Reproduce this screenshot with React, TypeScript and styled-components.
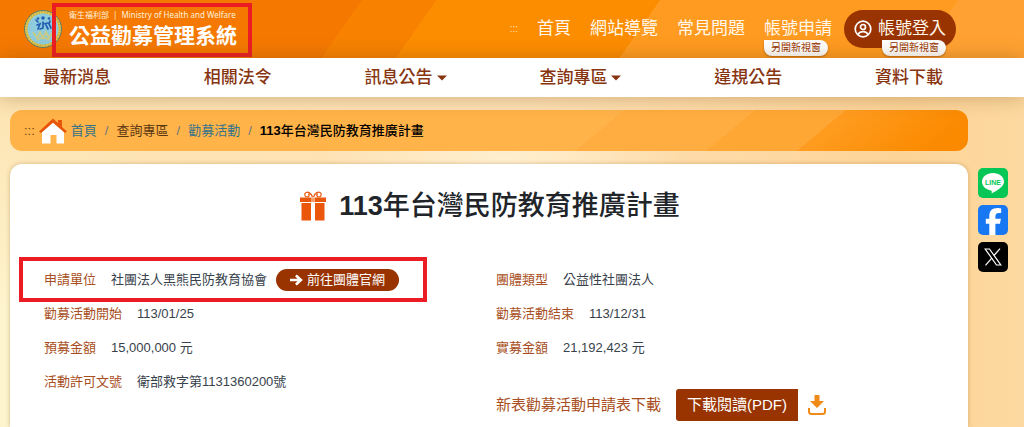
import React from 'react';
import styled, { createGlobalStyle, css } from 'styled-components';
import { FaFacebookF } from 'react-icons/fa6';

const rust = '#993300';

const GlobalStyle = createGlobalStyle`
  * { box-sizing: border-box; }
  body {
    margin: 0;
    font-family: "Liberation Sans", "Noto Sans CJK TC", sans-serif;
    font-size: 13px;
    line-height: 20px;
    color: #212529;
  }
  a { text-decoration: none; }
`;

const Page = styled.div`
  min-height: 100vh;
  display: flex;
  flex-direction: column;
  background:
    radial-gradient(ellipse 180px 50px at 49% 160px, rgba(255, 243, 214, 0.8), transparent),
    radial-gradient(ellipse 300px 320px at 0 100%, #fdf3cc 40%, rgba(253, 243, 204, 0)),
    linear-gradient(90deg, #fde4b3 0%, #fee1b5 50%, #fdd498 88%, #fcd9a0 100%);
`;

const Header = styled.header`
  min-height: 58px;
  display: flex;
  align-items: center;
  justify-content: space-between;
  padding: 0 68px 0 23px;
  background: linear-gradient(
    125deg,
    #f57900 0 34%,
    #f88200 34% 41%,
    #fd8d00 41% 62%,
    #ff9b20 62% 90%,
    #ffa233 90% 100%
  );
`;

const Brand = styled.a`
  display: flex;
  align-items: center;
  gap: 6px;
  color: #fff;
`;

const BrandText = styled.span`
  position: relative;
  display: flex;
  flex-direction: column;
  font-family: "Noto Sans", "Noto Sans CJK TC", sans-serif;
`;

const Ministry = styled.span`
  display: flex;
  gap: 4px;
  font-size: 8px;
  line-height: 12px;
  color: #fff0dc;
`;

const SystemName = styled.strong`
  font-size: 21px;
  line-height: 28px;
  font-weight: 700;
`;

const Frame = styled.span<{ $inset: string }>`
  position: absolute;
  inset: ${(p) => p.$inset};
  border: 4px solid #ec1c24;
  pointer-events: none;
`;

const TopNav = styled.nav`
  display: flex;
  align-items: center;
  gap: 19px;
`;

const linkText = css`
  font-size: 17px;
  line-height: 26px;
  color: #fff7ea;
  white-space: nowrap;
`;

const TopLink = styled.a`
  ${linkText}
  position: relative;
`;

const Dots = styled.a<{ $size: number; $color: string }>`
  font-size: ${(p) => p.$size}px;
  color: ${(p) => p.$color};
`;

const Login = styled.a`
  ${linkText}
  position: relative;
  display: flex;
  align-items: center;
  gap: 6px;
  margin-left: -7px;
  padding: 6px 10px;
  border-radius: 20px;
  background: ${rust};
`;

const NewWindow = styled.span<{ $right: number }>`
  position: absolute;
  right: ${(p) => p.$right}px;
  bottom: -14px;
  padding: 0 7px;
  border-radius: 0 8px 8px 8px;
  background: #fff;
  box-shadow: 0 1px 2px rgba(120, 50, 0, 0.5);
  font-size: 10px;
  line-height: 16px;
  color: ${rust};
`;

const LoginBadge = styled(NewWindow)`
  bottom: -8px;
`;

const MainNav = styled.nav`
  position: relative;
  display: flex;
  justify-content: space-between;
  align-items: center;
  min-height: 39px;
  padding: 0 81px 0 43px;
  background: #fff;
  box-shadow: 0 0 20px rgba(110, 70, 20, 0.35);
`;

const MainLink = styled.a`
  display: flex;
  align-items: center;
  gap: 4px;
  font-size: 17px;
  line-height: 26px;
  font-weight: 500;
  color: #873510;
  white-space: nowrap;
`;

const Body = styled.div`
  flex: 1;
  display: flex;
  gap: 10px;
  padding: 13px 16px 0 10px;
`;

const Main = styled.main`
  flex: 1;
  display: flex;
  flex-direction: column;
  gap: 13px;
`;

const Crumbs = styled.nav`
  display: flex;
  align-items: center;
  gap: 4px;
  min-height: 41px;
  padding: 0 14px;
  border-radius: 12px;
  background: linear-gradient(
    140deg,
    #ffb349 0,
    #ffb349 61%,
    #ffad40 61% 74%,
    #ffa735 74% 83%,
    #ff9c20 83%,
    #fb8a00 96%
  );
`;

const CrumbList = styled.ol`
  display: flex;
  margin: 0;
  padding: 0;
  list-style: none;
`;

const Crumb = styled.li`
  color: #5b3714;
  & + &::before {
    content: "/";
    padding: 0 8px;
    color: #6c757d;
  }
  &[aria-current] {
    color: #000;
    font-weight: 500;
  }
  a { color: #34748a; }
`;

const Card = styled.section`
  flex: 1;
  padding: 22px 20px 6px 34px;
  border-radius: 12px 12px 0 0;
  background: #fff;
  box-shadow: 0 0 4px rgba(130, 80, 20, 0.35);
`;

const Title = styled.h1`
  display: flex;
  justify-content: center;
  align-items: center;
  gap: 13px;
  margin: 0 0 37px;
  padding-right: 12px;
  font-size: 27px;
  line-height: 40px;
  font-weight: 500;
`;

const Columns = styled.div`
  display: grid;
  grid-template-columns: 1fr 1fr;
`;

const Details = styled.dl`
  margin: 0;
`;

const Row = styled.div`
  position: relative;
  display: flex;
  align-items: center;
  gap: 15px;
  height: 34px;
  white-space: nowrap;
  dt { color: #a84e22; }
  dd {
    display: flex;
    align-items: center;
    gap: 9px;
    margin: 0;
    color: #38424c;
  }
`;

const SiteLink = styled.a`
  display: flex;
  align-items: center;
  gap: 4px;
  padding: 0 14px;
  border-radius: 11px;
  background: ${rust};
  color: #fff;
  line-height: 22px;
`;

const Download = styled.div`
  display: flex;
  align-items: center;
  gap: 15px;
  margin-top: 24px;
  font-size: 15px;
  color: #a84e22;
  white-space: nowrap;
`;

const DownloadLinks = styled.div`
  display: flex;
  align-items: center;
  gap: 10px;
`;

const PdfButton = styled.button`
  padding: 0 11px;
  border: 0;
  border-radius: 3px 0 0 3px;
  background: ${rust};
  color: #fff;
  font-family: inherit;
  font-size: 15px;
  line-height: 32px;
`;

const Share = styled.aside`
  display: flex;
  flex-direction: column;
  gap: 7px;
  padding-top: 58px;
`;

const ShareLink = styled.a<{ $bg: string }>`
  display: flex;
  justify-content: center;
  align-items: center;
  width: 30px;
  height: 30px;
  overflow: hidden;
  border-radius: 5px;
  background: ${(p) => p.$bg};
  color: #fff;
`;

const FacebookMark = styled(FaFacebookF)`
  align-self: flex-end;
`;

const Emblem = () => (
  <svg width="40" height="40" viewBox="0 0 40 40" aria-hidden="true">
    <circle cx="20" cy="20" r="18.5" fill="#e2c94f" stroke="#5f7d68" strokeWidth="1" />
    <circle cx="20" cy="20" r="16.5" fill="none" stroke="#927f35" strokeWidth="2.5" strokeDasharray="1.2 1.6" opacity=".35" />
    <circle cx="20" cy="20" r="15.5" fill="#8ecbdc" />
    <g fill="none" stroke="#2360b5" strokeWidth="1.7" strokeLinecap="round">
      <path d="M13 11l2 2M14 16l3-1-2 5M20 13v6l-3 1M20 15l5-1M23 16l2 4M27 12l-1 3 2 4" />
    </g>
    <g fill="#2360b5">
      <circle cx="15" cy="9.500" r="1.300" />
      <circle cx="20" cy="9" r="1.800" />
      <circle cx="26" cy="9.500" r="1.300" />
    </g>
    <g fill="none" stroke="#c8cc86" strokeWidth="1.800">
      <path d="M10 23l4 6 3-6 3 6 3-6 3 6 4-6M14 31c3-3 9-3 12 0" />
    </g>
  </svg>
);

const UserIcon = () => (
  <svg width="18" height="18" viewBox="0 0 18 18" fill="none" stroke="#fff" strokeWidth="1.700" aria-hidden="true">
    <circle cx="9" cy="9" r="7.800" />
    <circle cx="9" cy="7" r="2.500" />
    <path d="M4 14.500c1.200-2 3-2.800 5-2.800s3.800.8 5 2.800" />
  </svg>
);

const Caret = () => (
  <svg width="10" height="6" viewBox="0 0 10 6" aria-hidden="true">
    <path d="M0 .5h10L5 5.500z" fill="#873510" />
  </svg>
);

const HomeIcon = () => (
  <svg width="28" height="26" viewBox="0 0 28 26" aria-hidden="true">
    <path d="M3 14L14 4l11 10v11.500h-7.500V17h-6v8.500H3z" fill="#fff" />
    <path d="M0 13.500L14 .5l5 4.600V2h4v6.900l5 4.600-2 1.500L14 4.800 2 15z" fill="#e8560c" />
  </svg>
);

const GiftIcon = () => (
  <svg width="26" height="30" viewBox="0 0 26 30" aria-hidden="true">
    <g fill="none" stroke="#e8560c" strokeWidth="1.200">
      <path d="M12.500 6C11 2 8 .5 6 1.500S4.500 6 7 6s3-3 1-3M13.500 6C15 2 18 .5 20 1.500S21.500 6 19 6s-3-3-1-3" />
    </g>
    <path d="M0 6.500h11v4.500H0zM15 6.500H26v4.500H15zM1.500 12h9.500V29.500H1.500zM15 12h9.500V29.500H15z" fill="#ea560a" />
    <path d="M11 6.500h4V11h-4z" fill="#f6a06c" />
  </svg>
);

const ArrowIcon = () => (
  <svg width="13" height="12" viewBox="0 0 13 12" aria-hidden="true">
    <path d="M0 4.800h7.600L5 2.200 6.900.4 12.800 6l-5.900 5.600L5 9.800l2.600-2.600H0z" fill="#fff" />
  </svg>
);

const DownloadIcon = () => (
  <svg width="18" height="20" viewBox="0 0 18 20" aria-hidden="true">
    <path d="M6.500 0h5v6H16l-7 7-7-7h4.500z" fill="#ef8a17" />
    <path d="M1 13v3.500Q1 19 3.500 19h11q2.500 0 2.500-2.500V13" fill="none" stroke="#ef8a17" strokeWidth="2" />
  </svg>
);

const LineIcon = () => (
  <svg width="24" height="24" viewBox="0 0 24 24" aria-hidden="true">
    <path d="M12 2C5.800 2 1 5.900 1 10.800c0 4.400 3.900 8 9 8.600.9.200.8.700.6 3.100 4-2 12.400-6.500 12.400-11.700C23 5.900 18.200 2 12 2z" fill="#fff" />
    <text x="12" y="13.500" textAnchor="middle" fontFamily="Liberation Sans" fontWeight="700" fontSize="7" fill="#06c755">LINE</text>
  </svg>
);

const XIcon = () => (
  <svg width="18" height="18" viewBox="0 0 18 18" fill="none" stroke="#fff" strokeWidth="1.200" aria-hidden="true">
    <path d="M1.200 1h4.300l11.300 16h-4.300z" />
    <path d="M16 .6L10 7.500M7.800 10.200L1.500 17.400" />
  </svg>
);

const menu = [
  { label: '最新消息' },
  { label: '相關法令' },
  { label: '訊息公告', more: true },
  { label: '查詢專區', more: true },
  { label: '違規公告' },
  { label: '資料下載' },
];

export default function App() {
  return (
    <>
      <GlobalStyle />
      <Page>
        <Header>
          <Brand href="#">
            <Emblem />
            <BrandText>
              <Ministry>
                <span>衛生福利部</span>
                <span>|</span>
                <span>Ministry of Health and Welfare</span>
              </Ministry>
              <SystemName>公益勸募管理系統</SystemName>
              <Frame $inset="-6px -15px -8px -17px" />
            </BrandText>
          </Brand>
          <TopNav>
            <Dots href="#" $size={10} $color="#ffe0b8">:::</Dots>
            <TopLink href="#">首頁</TopLink>
            <TopLink href="#">網站導覽</TopLink>
            <TopLink href="#">常見問題</TopLink>
            <TopLink href="#">
              帳號申請
              <NewWindow $right={4}>另開新視窗</NewWindow>
            </TopLink>
            <Login href="#">
              <UserIcon />
              帳號登入
              <LoginBadge $right={10}>另開新視窗</LoginBadge>
            </Login>
          </TopNav>
        </Header>
        <MainNav>
          {menu.map((item) => (
            <MainLink href="#" key={item.label}>
              {item.label}
              {item.more && <Caret />}
            </MainLink>
          ))}
        </MainNav>
        <Body>
          <Main>
            <Crumbs aria-label="breadcrumb">
              <Dots href="#" $size={13} $color="#6d4316">:::</Dots>
              <HomeIcon />
              <CrumbList>
                <Crumb><a href="#">首頁</a></Crumb>
                <Crumb>查詢專區</Crumb>
                <Crumb><a href="#">勸募活動</a></Crumb>
                <Crumb aria-current="page"><b>113</b>年台灣民防教育推廣計畫</Crumb>
              </CrumbList>
            </Crumbs>
            <Card>
              <Title>
                <GiftIcon />
                <span><b>113</b>年台灣民防教育推廣計畫</span>
              </Title>
              <Columns>
                <Details>
                  <Row>
                    <dt>申請單位</dt>
                    <dd>
                      社團法人黑熊民防教育協會
                      <SiteLink href="#">
                        <ArrowIcon />
                        前往團體官網
                      </SiteLink>
                    </dd>
                    <Frame $inset="-6px 69px -5px -25px" />
                  </Row>
                  <Row>
                    <dt>勸募活動開始</dt>
                    <dd>113/01/25</dd>
                  </Row>
                  <Row>
                    <dt>預募金額</dt>
                    <dd>15,000,000 元</dd>
                  </Row>
                  <Row>
                    <dt>活動許可文號</dt>
                    <dd>衛部救字第1131360200號</dd>
                  </Row>
                </Details>
                <div>
                  <Details>
                    <Row>
                      <dt>團體類型</dt>
                      <dd>公益性社團法人</dd>
                    </Row>
                    <Row>
                      <dt>勸募活動結束</dt>
                      <dd>113/12/31</dd>
                    </Row>
                    <Row>
                      <dt>實募金額</dt>
                      <dd>21,192,423 元</dd>
                    </Row>
                  </Details>
                  <Download>
                    <span>新表勸募活動申請表下載</span>
                    <DownloadLinks>
                      <PdfButton type="button">下載閱讀(PDF)</PdfButton>
                      <DownloadIcon />
                    </DownloadLinks>
                  </Download>
                </div>
              </Columns>
            </Card>
          </Main>
          <Share>
            <ShareLink href="#" $bg="#06c755" aria-label="LINE"><LineIcon /></ShareLink>
            <ShareLink href="#" $bg="#1877f2" aria-label="Facebook"><FacebookMark size={27} /></ShareLink>
            <ShareLink href="#" $bg="#000" aria-label="X"><XIcon /></ShareLink>
          </Share>
        </Body>
      </Page>
    </>
  );
}
